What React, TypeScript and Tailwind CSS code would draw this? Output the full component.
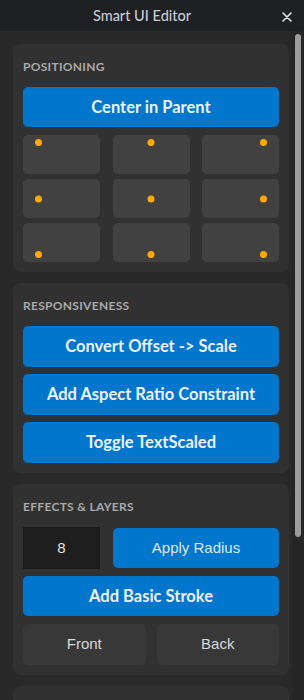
import React from "react";

const boldFont = "font-['Lato','Noto_Sans',sans-serif]";
const plainFont = "font-['Liberation_Sans','Arial',sans-serif]";

function Dot({ pos }: { pos: string }) {
  return <span className={`absolute w-[7px] h-[7px] rounded-full bg-[#ffaa00] ${pos}`} />;
}

const dotPositions = [
  "left-[12px] top-[4px]",
  "left-1/2 -translate-x-1/2 top-[4px]",
  "right-[12px] top-[4px]",
  "left-[12px] top-1/2 -translate-y-1/2",
  "left-1/2 -translate-x-1/2 top-1/2 -translate-y-1/2",
  "right-[12px] top-1/2 -translate-y-1/2",
  "left-[12px] bottom-[4px]",
  "left-1/2 -translate-x-1/2 bottom-[4px]",
  "right-[12px] bottom-[4px]",
];

function Heading({ children }: { children: React.ReactNode }) {
  return (
    <div className={`${boldFont} text-[12px] leading-[14px] font-bold tracking-[0.3px] text-[#a9a9a9] uppercase mb-[13px]`}>
      {children}
    </div>
  );
}

function BlueButton({ children, h = "h-[40px]" }: { children: React.ReactNode; h?: string }) {
  return (
    <button className={`${boldFont} ${h} w-full rounded-[5px] bg-[#0077cc] text-[16.5px] font-bold text-[#eef2f6] flex items-center justify-center`}>
      {children}
    </button>
  );
}

export default function App() {
  return (
    <div className="w-[304px] h-[700px] overflow-hidden flex flex-col bg-[#292929]">
      <div className="h-[31px] shrink-0 bg-[#1f2024] flex items-center">
        <div className="flex-1 flex justify-center pl-[2px]">
          <span className={`${boldFont} text-[14.5px] text-[#c3ccd8] font-medium`}>Smart UI Editor</span>
        </div>
        <div className="w-[22px] h-[31px] shrink-0 relative">
          <svg className="absolute left-[0px] top-[12px]" width="10" height="10" viewBox="0 0 10 10">
            <path d="M1 1 L9 9 M9 1 L1 9" stroke="#e6e6e6" strokeWidth="1.6" strokeLinecap="round" />
          </svg>
        </div>
      </div>
      <div className="flex-1 flex min-h-0">
        <div className="w-[292px] pl-[13px] pr-[3px] pt-[13px] flex flex-col gap-[11px] overflow-hidden">
          <div className="shrink-0 rounded-[8px] bg-[#313131] px-[10px] pt-[16px] pb-[10px]">
            <Heading>Positioning</Heading>
            <BlueButton>Center in Parent</BlueButton>
            <div className="mt-[8px] grid grid-cols-3 gap-x-[12.5px] gap-y-[5px]">
              {dotPositions.map((p, i) => (
                <div key={i} className="relative h-[39px] rounded-[5px] bg-[#414141]">
                  <Dot pos={p} />
                </div>
              ))}
            </div>
          </div>
          <div className="shrink-0 rounded-[8px] bg-[#313131] px-[10px] pt-[16px] pb-[10px]">
            <Heading>Responsiveness</Heading>
            <div className="flex flex-col gap-[7px]">
              <BlueButton h="h-[41px]">Convert Offset -&gt; Scale</BlueButton>
              <BlueButton h="h-[41px]">Add Aspect Ratio Constraint</BlueButton>
              <BlueButton h="h-[41px]">Toggle TextScaled</BlueButton>
            </div>
          </div>
          <div className="shrink-0 rounded-[8px] bg-[#313131] px-[10px] pt-[16px] pb-[10px]">
            <Heading>Effects &amp; Layers</Heading>
            <div className="flex items-center gap-[13px] h-[42px]">
              <div className={`${plainFont} w-[77px] h-[42px] bg-[#1e1e1e] border border-[#1a1a1a] flex items-center justify-center text-[15px] text-[#e4e4e4]`}>
                8
              </div>
              <button className={`${plainFont} flex-1 h-[40px] rounded-[5px] bg-[#0077cc] text-[15px] text-[#dfe7ef] flex items-center justify-center`}>
                Apply Radius
              </button>
            </div>
            <div className="mt-[7px]">
              <BlueButton>Add Basic Stroke</BlueButton>
            </div>
            <div className="mt-[8px] grid grid-cols-2 gap-[11px]">
              <button className={`${plainFont} h-[41px] rounded-[5px] bg-[#383838] text-[15px] text-[#d8d8d8]`}>Front</button>
              <button className={`${plainFont} h-[41px] rounded-[5px] bg-[#383838] text-[15px] text-[#d8d8d8]`}>Back</button>
            </div>
          </div>
          <div className="shrink-0 h-[120px] rounded-[8px] bg-[#313131]" />
        </div>
        <div className="w-[12px] bg-[#252525] pt-[3px] pl-[3px]">
          <div className="w-[6px] h-[503px] rounded-full bg-[#9c9c9c]" />
        </div>
      </div>
    </div>
  );
}
